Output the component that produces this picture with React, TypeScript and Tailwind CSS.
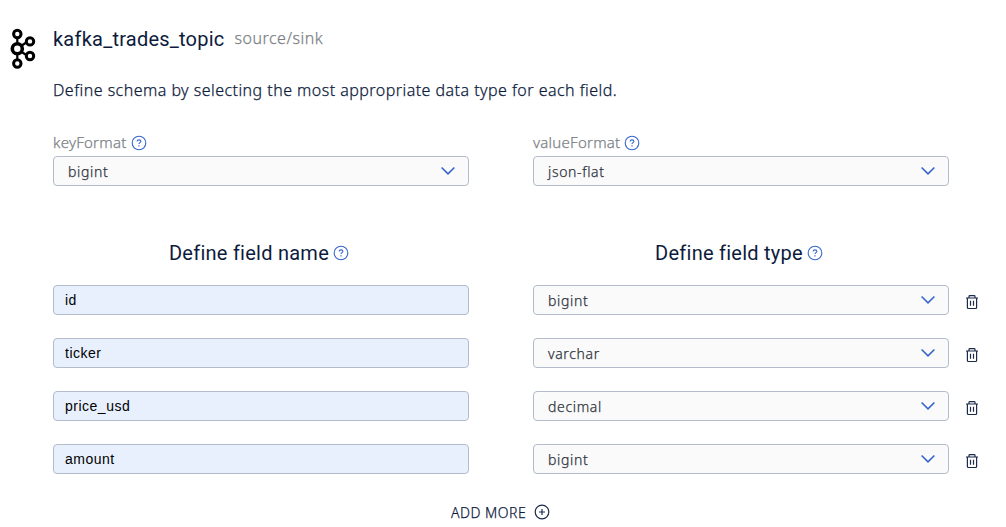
import React from "react";

const noto = "font-['Noto_Sans',sans-serif] font-light [-webkit-text-stroke:0.25px]";
const heading = "font-[Roboto,sans-serif] text-[20px] font-normal leading-6 [-webkit-text-stroke:0]";

function KafkaLogo() {
  return (
    <svg width="28" height="42" viewBox="0 0 28 42" fill="none" stroke="#000">
      <path d="M8.3 9v24M12 18l6-4M12 23.5l6 4" strokeWidth="2.2" />
      <g fill="#fff" strokeWidth="3">
        <circle cx="8.3" cy="6" r="3.7" />
        <circle cx="8.3" cy="20.7" r="5" strokeWidth="3.6" />
        <circle cx="8.3" cy="35.5" r="3.7" />
        <circle cx="21" cy="13.4" r="3.7" />
        <circle cx="21" cy="28" r="3.7" />
      </g>
    </svg>
  );
}

function Help() {
  return (
    <svg className="shrink-0" width="16" height="16" viewBox="0 0 16 16" fill="none" stroke="#3565cb" strokeWidth="1.1">
      <circle cx="8" cy="8" r="6.8" />
      <path d="M6.1 6.5C6.2 5.4 6.9 4.9 8 4.9s1.9.6 1.9 1.6C9.9 7.7 8 7.6 8 8.9" />
      <path d="M7.4 10.9h1.2" />
    </svg>
  );
}

function Select({ value }: { value: string }) {
  return (
    <button className={`${noto} flex h-[30px] w-[416px] items-center justify-between rounded-[4px] border border-[#b3bccb] bg-[#fafafa] pl-[14px] pr-[13px] text-[14px] tracking-[0.65px] text-[#30353d]`}>
      <span>{value}</span>
      <svg width="14" height="10" viewBox="0 0 14 10" fill="none" stroke="#3565cb" strokeWidth="1.6">
        <path d="M.6 1.5 7 7.9l6.4-6.4" />
      </svg>
    </button>
  );
}

function Trash() {
  return (
    <svg width="14" height="16" viewBox="0 0 14 16" fill="none" stroke="#1c2b4a" strokeWidth="1.2">
      <path d="M1 4h12M4 4V2.4q0-.8.8-.8h4.4q.8 0 .8.8V4M2.4 4v9.5q0 1 1 1h7.2q1 0 1-1V4M5.5 6.8v5M8.5 6.8v5" />
    </svg>
  );
}

const fields = [
  ["id", "bigint"],
  ["ticker", "varchar"],
  ["price_usd", "decimal"],
  ["amount", "bigint"],
];

export default function App() {
  return (
    <main className={`${noto} flex h-[527px] w-[1006px] overflow-hidden bg-white text-[#0d1b3d]`}>
      <div className="w-[53px] shrink-0 pl-[9px] pt-[28px]"><KafkaLogo /></div>
      <div className="w-[940px] shrink-0 pt-[27px]">
        <header className="flex h-6 items-center gap-[10px]">
          <h1 className={`${heading} tracking-[0.23px]`}>kafka_trades_topic</h1>
          <span className="-mt-[2px] text-[16px] leading-6 tracking-[0.5px] text-[#7c7f86]">source/sink</span>
        </header>
        <p className="mt-[27px] text-[16px] leading-6 tracking-[0.46px]">Define schema by selecting the most appropriate data type for each field.</p>
        <section className="mt-[31px] flex gap-16">
          {[["keyFormat", "bigint"], ["valueFormat", "json-flat"]].map(([label, value]) => (
            <div key={label}>
              <div className="flex h-[23px] items-center gap-1 pb-[4px] text-[15px] leading-5 tracking-[0.25px] text-[#7c7f86]">
                <span className="-mt-px">{label}</span><Help />
              </div>
              <Select value={value} />
            </div>
          ))}
        </section>
        <section className="mt-[55px] flex gap-16">
          {["Define field name", "Define field type"].map((title) => (
            <div key={title} className="flex h-6 w-[416px] items-center justify-center gap-1 pr-[4px]">
              <h2 className={`${heading} tracking-[0.25px]`}>{title}</h2><Help />
            </div>
          ))}
        </section>
        <section className="mt-5 flex flex-col gap-[23px]">
          {fields.map(([name, type]) => (
            <div key={name} className="flex items-center">
              <input defaultValue={name} className="mr-16 h-[30px] w-[416px] rounded-[4px] border border-[#b3bccb] bg-[#e8f0fe] px-[11px] font-['Liberation_Sans',sans-serif] text-[14px] font-normal tracking-[0.5px] text-black outline-none [-webkit-text-stroke:0]" />
              <Select value={type} />
              <button className="ml-4 mt-[3px]" aria-label="Delete field"><Trash /></button>
            </div>
          ))}
        </section>
        <button className="ml-[398px] mt-[26px] flex h-6 items-center gap-2 text-[14px] leading-6 tracking-[0.5px]">
          <span className="mt-[2px]">ADD MORE</span>
          <svg width="16" height="16" viewBox="0 0 16 16" fill="none" stroke="#1c2b4a" strokeWidth="1.2"><circle cx="8" cy="8" r="6.8" /><path d="M8 5v6M5 8h6" /></svg>
        </button>
      </div>
    </main>
  );
}
